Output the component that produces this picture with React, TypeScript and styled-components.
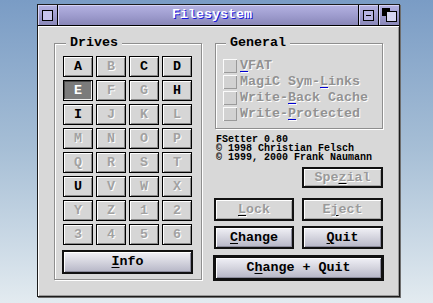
import React from "react";
import styled, { createGlobalStyle } from "styled-components";

const GlobalStyle = createGlobalStyle`
  html, body {
    margin: 0;
    padding: 0;
  }
  body {
    font-family: "Liberation Mono", "DejaVu Sans Mono", monospace;
  }
`;

const MONO = `"Liberation Mono", "DejaVu Sans Mono", monospace`;

/**
 *  Desktop + window chrome
 */

const Desktop = styled.main`
  width: 433px;
  height: 303px;
  box-sizing: border-box;
  padding: 4px 0 0 37px;
  overflow: hidden;
  background: linear-gradient(180deg, #7a9cc5 0%, #a7bfd6 50%, #e3ebf0 100%);
`;

const Window = styled.section`
  width: 361px;
  height: 291px;
  border: 1px solid #1c1c1c;
  box-shadow: 1px 1px 0 #6e6e6e;
  background: #d8d8d8;
  display: flex;
  flex-direction: column;
`;

const TitleBar = styled.header`
  display: flex;
  height: 20px;
  flex-shrink: 0;
  border-bottom: 1px solid #000;
`;

type CellProps = { $w?: number };

const TitleCell = styled.div<CellProps>`
  width: ${p => (p.$w ? `${p.$w}px` : "auto")};
  flex: ${p => (p.$w ? "none" : 1)};
  display: flex;
  align-items: center;
  justify-content: center;
  background: linear-gradient(180deg, #b4b2e2 0%, #9d9bcd 55%, #8987b8 100%);
  box-shadow: inset 1px 1px 0 #d6d4f6;
  & + & {
    border-left: 1px solid #000;
  }
`;

const TitleText = styled.h1`
  margin: 0;
  padding-left: 8px;
  font: bold 13.33px/20px ${MONO};
  color: #fff;
  text-shadow: 1px 1px 0 #1717e0;
`;

const Body = styled.div`
  flex: 1;
  display: flex;
  align-items: flex-start;
  padding: 10px 0 0 16px;
  box-shadow: inset 1px 1px 0 #fff, inset -1px -1px 0 #9a9a9a;
`;

/**
 *  Frames
 */

type FrameProps = { $w: number; $pad: string; $ml?: number };

const Frame = styled.fieldset<FrameProps>`
  box-sizing: border-box;
  width: ${p => p.$w}px;
  min-width: 0;
  margin: 0 0 0 ${p => p.$ml ?? 0}px;
  padding: ${p => p.$pad};
  border: 1px solid #8e8e8e;
  box-shadow: inset 1px 1px 0 #fff, 1px 1px 0 #fff;
`;

const Legend = styled.legend`
  margin-left: 3px;
  padding: 0 4px;
  font: bold 13.33px/14px ${MONO};
  color: #000;
  background: #d8d8d8;
`;

/**
 *  Drives
 */

const DriveGrid = styled.div`
  display: grid;
  grid-template-columns: repeat(4, 30px);
  grid-auto-rows: 21px;
  gap: 3px;
`;

type DriveState = "on" | "off" | "sel";

const DriveButton = styled.button<{ $state: DriveState }>`
  box-sizing: border-box;
  width: 30px;
  height: 21px;
  margin: 0;
  padding: 0;
  border: 1px solid #000;
  font: bold 13.33px/19px ${MONO};
  background: ${p => (p.$state === "sel" ? "#7b7b7b" : "#d6d6d6")};
  color: ${p => (p.$state === "on" ? "#000" : p.$state === "sel" ? "#fff" : "#a2a2a2")};
  text-shadow: ${p => (p.$state === "off" ? "1px 1px 0 #fff" : "none")};
  box-shadow: ${p =>
    p.$state === "sel"
      ? "inset -1px -1px 0 #f0f0f0, inset 1px 1px 0 #4a4a4a"
      : "inset 1px 1px 0 #fff, inset -1px -1px 0 #8a8a8a"};
`;

/**
 *  Buttons
 */

type PushProps = { $h: number; $w?: number; $def?: boolean };

const PushButton = styled.button<PushProps>`
  box-sizing: border-box;
  width: ${p => (p.$w ? `${p.$w}px` : "100%")};
  height: ${p => p.$h}px;
  margin: 0;
  padding: 0;
  border: ${p => (p.$def ? 3 : 2)}px solid #111;
  font: bold 13.33px/16px ${MONO};
  color: #000;
  background: linear-gradient(180deg, #f0f0f6 0%, #d4d4de 50%, #b6b6c6 100%);
  box-shadow: inset 1px 1px 0 #fff, inset -1px -1px 0 #8c8c9c;
  &:disabled {
    background: #d8d8d8;
    color: #9a9a9a;
    text-shadow: 1px 1px 0 #fff;
    box-shadow: inset 1px 1px 0 #fff, inset -1px -1px 0 #a8a8a8;
  }
`;

const Key = styled.span<{ $c?: string }>`
  text-decoration: underline;
  text-decoration-color: ${p => p.$c ?? "#000"};
  text-decoration-thickness: 1px;
  text-underline-offset: 2px;
`;

/**
 *  Right column
 */

const RightColumn = styled.div`
  width: 171px;
  margin-left: 11px;
  display: flex;
  flex-direction: column;
`;

const Option = styled.label`
  display: flex;
  align-items: center;
  gap: 3px;
  height: 16px;
  font: bold 13.33px/16px ${MONO};
  color: #929292;
  text-shadow: 1px 1px 0 #fff;
  white-space: pre;
`;

const CheckBox = styled.span`
  box-sizing: border-box;
  width: 14px;
  height: 14px;
  flex: none;
  background: #d2d2d2;
  box-shadow: inset 1px 1px 0 #fbfbfb, inset -1px -1px 0 #9a9a9a;
`;

const Credits = styled.p`
  margin: 6px 0 0 3px;
  font: bold 10px/9px ${MONO};
  color: #000;
  white-space: pre;
`;

const ButtonRow = styled.div<{ $mt: number }>`
  display: grid;
  grid-template-columns: 80px 81px;
  column-gap: 8px;
  margin: ${p => p.$mt}px 1px 0;
`;

const drives: [string, DriveState][] = [
  ["A", "on"], ["B", "off"], ["C", "on"], ["D", "on"],
  ["E", "sel"], ["F", "off"], ["G", "off"], ["H", "on"],
  ["I", "on"], ["J", "off"], ["K", "off"], ["L", "off"],
  ["M", "off"], ["N", "off"], ["O", "off"], ["P", "off"],
  ["Q", "off"], ["R", "off"], ["S", "off"], ["T", "off"],
  ["U", "on"], ["V", "off"], ["W", "off"], ["X", "off"],
  ["Y", "off"], ["Z", "off"], ["1", "off"], ["2", "off"],
  ["3", "off"], ["4", "off"], ["5", "off"], ["6", "off"]
];

const options: [string, string, string][] = [
  ["", "V", "FAT"],
  ["MagiC Sym-", "L", "inks"],
  ["Write-", "B", "ack Cache"],
  ["Write-", "P", "rotected"]
];

const App: React.FC = () => {
  return (
    <Desktop>
      <GlobalStyle />
      <Window>
        <TitleBar>
          <TitleCell $w={19}>
            <svg width="11" height="11" viewBox="0 0 11 11">
              <rect x="0.5" y="0.5" width="10" height="10" fill="#c6c4ec" stroke="#000" />
            </svg>
          </TitleCell>
          <TitleCell>
            <TitleText>Filesystem</TitleText>
          </TitleCell>
          <TitleCell $w={19}>
            <svg width="11" height="11" viewBox="0 0 11 11">
              <rect x="0.5" y="0.5" width="10" height="10" fill="#b6b4e2" stroke="#000" />
              <path d="M3 5.5h5" stroke="#000" />
            </svg>
          </TitleCell>
          <TitleCell $w={20}>
            <svg width="15" height="15" viewBox="0 0 15 15">
              <rect x="0" y="0" width="8" height="8" fill="#000" />
              <rect x="4.5" y="3.5" width="10" height="10" fill="#d6d6f2" stroke="#000" />
            </svg>
          </TitleCell>
        </TitleBar>

        <Body>
          <Frame $w={148} $pad="6px 8px 5px">
            <Legend>Drives</Legend>
            <DriveGrid>
              {drives.map(([d, s]) => (
                <DriveButton key={d} $state={s} disabled={s === "off"}>
                  {d}
                </DriveButton>
              ))}
            </DriveGrid>
            <PushButton $h={24} style={{ marginTop: 5, width: 131, marginLeft: -1 }}>
              <Key>I</Key>nfo
            </PushButton>
          </Frame>

          <RightColumn>
            <Frame $w={168} $pad="8px 7px 6px" $ml={2}>
              <Legend>General</Legend>
              {options.map(([a, k, b]) => (
                <Option key={a + k + b}>
                  <CheckBox />
                  <span>
                    {a}
                    <Key $c="#0000d0">{k}</Key>
                    {b}
                  </span>
                </Option>
              ))}
            </Frame>

            <Credits>
              {"FSetter 0.80\n© 1998 Christian Felsch\n© 1999, 2000 Frank Naumann"}
            </Credits>

            <PushButton $h={21} $w={81} disabled style={{ alignSelf: "flex-end", margin: "5px 1px 0 0" }}>
              Spe<Key>z</Key>ial
            </PushButton>

            <ButtonRow $mt={10}>
              <PushButton $h={23} disabled>
                <Key>L</Key>ock
              </PushButton>
              <PushButton $h={23} disabled>
                E<Key>j</Key>ect
              </PushButton>
            </ButtonRow>

            <ButtonRow $mt={5}>
              <PushButton $h={23}>
                <Key>C</Key>hange
              </PushButton>
              <PushButton $h={23}>
                <Key>Q</Key>uit
              </PushButton>
            </ButtonRow>

            <PushButton $h={26} $def style={{ marginTop: 6 }}>
              C<Key>h</Key>ange + Quit
            </PushButton>
          </RightColumn>
        </Body>
      </Window>
    </Desktop>
  );
};

export default App;
